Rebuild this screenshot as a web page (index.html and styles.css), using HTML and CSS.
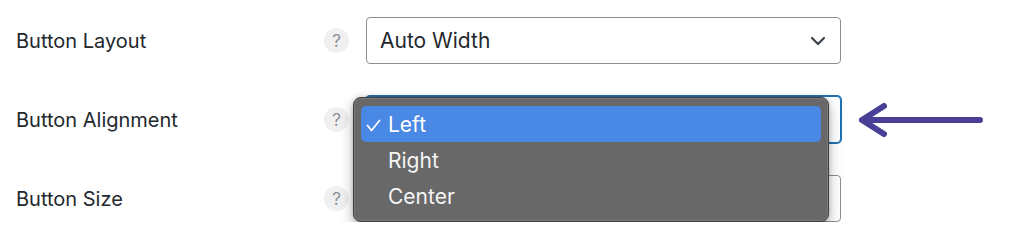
FILE: index.html
```html
<!DOCTYPE html>
<html lang="en">
<head>
<meta charset="utf-8">
<title>Button settings</title>
<link rel="stylesheet" href="styles.css">
</head>
<body>
<div class="settings">
  <div class="row">
    <div class="label">Button Layout</div>
    <span class="help">?</span>
    <div class="select">
      <span class="value">Auto Width</span>
      <svg class="chev" width="16" height="10" viewBox="0 0 16 10"><path d="M2 2 L8 8 L14 2" fill="none" stroke="#3c434a" stroke-width="2.2" stroke-linecap="round" stroke-linejoin="round"/></svg>
    </div>
  </div>
  <div class="row">
    <div class="label">Button Alignment</div>
    <span class="help">?</span>
    <div class="select focused">
      <div class="menu">
        <div class="item active"><span class="check"><svg width="15" height="13" viewBox="0 0 15 13"><path d="M1.5 6.5 L5.5 11.5 L13.5 1.5" fill="none" stroke="#ffffff" stroke-width="1.8" stroke-linecap="round" stroke-linejoin="round"/></svg></span>Left</div>
        <div class="item"><span class="check"></span>Right</div>
        <div class="item"><span class="check"></span>Center</div>
      </div>
    </div>
    <svg class="arrow" width="128" height="36" viewBox="0 0 128 36"><path d="M4 18 H122 M26 4 L4 18 L26 32" fill="none" stroke="#4a3f96" stroke-width="6" stroke-linecap="round" stroke-linejoin="round"/></svg>
  </div>
  <div class="row">
    <div class="label">Button Size</div>
    <span class="help">?</span>
    <div class="select"></div>
  </div>
</div>
</body>
</html>
```
FILE: styles.css
```css
html, body {
  margin: 0;
  padding: 0;
  background: #ffffff;
}
body {
  font-family: Inter, "Liberation Sans", sans-serif;
  color: #2c3338;
}
.settings {
  display: flex;
  flex-direction: column;
  gap: 32px;
  padding: 17px 0 0 16px;
}
.row {
  display: flex;
  align-items: center;
  height: 47px;
}
.label {
  width: 308px;
  font-size: 20px;
  color: #23282d;
}
.help {
  width: 25px;
  height: 25px;
  border-radius: 50%;
  background: #f0f0f1;
  color: #8a8d91;
  font-size: 17px;
  display: flex;
  align-items: center;
  justify-content: center;
  margin-right: 17px;
  flex: none;
}
.select {
  position: relative;
  box-sizing: border-box;
  width: 475px;
  height: 47px;
  border: 1px solid #8c8f94;
  border-radius: 4px;
  display: flex;
  align-items: center;
  justify-content: space-between;
  padding: 0 14px 0 13px;
  font-size: 21px;
  color: #23282d;
  background: #fff;
}
.select.focused {
  border-color: #2271b1;
  box-shadow: 0 0 0 1px #2271b1;
}
.chev {
  display: block;
}
.arrow {
  margin-left: 17px;
  display: block;
}
.menu {
  position: absolute;
  left: -14px;
  top: 0;
  width: 476px;
  box-sizing: border-box;
  padding: 8px 7px 7px 7px;
  background: #686868;
  border: 1px solid #3f3f3f;
  border-radius: 8px;
  box-shadow: inset 0 0 0 1px rgba(255,255,255,0.12), 0 6px 14px rgba(0,0,0,0.28), 0 0 4px rgba(0,0,0,0.2);
  z-index: 5;
}
.item {
  height: 36px;
  display: flex;
  align-items: center;
  border-radius: 5px;
  color: #f4f4f4;
  font-size: 21px;
  padding-left: 5px;
}
.item.active {
  background: #4a88e6;
  color: #ffffff;
}
.check {
  width: 22px;
  display: flex;
  align-items: center;
  padding-top: 2px;
}
```
